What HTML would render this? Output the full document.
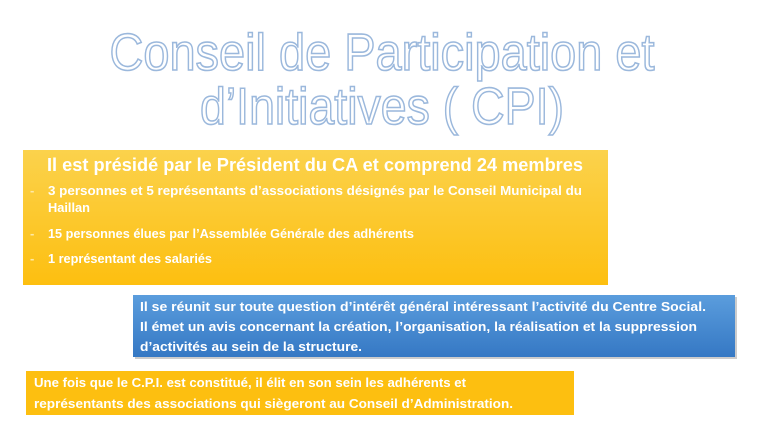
<!DOCTYPE html>
<html><head><meta charset="utf-8"><style>
html,body{margin:0;padding:0;background:#fff;width:768px;height:432px;overflow:hidden}
svg{display:block}
text{font-family:"Liberation Sans",sans-serif}
</style></head><body>
<svg width="768" height="432" viewBox="0 0 768 432">
<defs>
<linearGradient id="y1" x1="0" y1="0" x2="0" y2="1"><stop offset="0" stop-color="#fbd24c"/><stop offset="1" stop-color="#fdbf10"/></linearGradient>
<linearGradient id="b1" x1="0" y1="0" x2="0" y2="1"><stop offset="0" stop-color="#5b9ddd"/><stop offset="1" stop-color="#3578c4"/></linearGradient>
</defs>
<g fill="none" stroke="#9bb8dc" stroke-width="1.6">
<text x="382" y="70" text-anchor="middle" font-size="52" textLength="545" lengthAdjust="spacingAndGlyphs">Conseil de Participation et</text>
<text x="382" y="124" text-anchor="middle" font-size="52" textLength="364" lengthAdjust="spacingAndGlyphs">d’Initiatives ( CPI)</text>
</g>
<rect x="23" y="150" width="585" height="135" fill="url(#y1)"/>
<g fill="#fff" font-weight="bold">
<text x="47" y="171" font-size="18" textLength="536" lengthAdjust="spacingAndGlyphs">Il est présidé par le Président du CA et comprend 24 membres</text>
<g font-size="13">
<text x="30" y="195" fill="#fde9a8">-</text><text x="48" y="195" textLength="534" lengthAdjust="spacingAndGlyphs">3 personnes et 5 représentants d’associations désignés par le Conseil Municipal du</text>
<text x="48" y="212" textLength="42" lengthAdjust="spacingAndGlyphs">Haillan</text>
<text x="30" y="238" fill="#fde9a8">-</text><text x="48" y="238" textLength="366" lengthAdjust="spacingAndGlyphs">15 personnes élues par l’Assemblée Générale des adhérents</text>
<text x="30" y="263" fill="#fde9a8">-</text><text x="48" y="263" textLength="164" lengthAdjust="spacingAndGlyphs">1 représentant des salariés</text>
</g></g>
<rect x="135" y="297" width="602" height="62" fill="#999" opacity="0.5"/>
<rect x="133" y="295" width="602" height="62" fill="url(#b1)"/>
<g fill="#fff" font-weight="bold" font-size="13">
<text x="140" y="311" textLength="566" lengthAdjust="spacingAndGlyphs">Il se réunit sur toute question d’intérêt général intéressant l’activité du Centre Social.</text>
<text x="140" y="331" textLength="557" lengthAdjust="spacingAndGlyphs">Il émet un avis concernant la création, l’organisation, la réalisation et la suppression</text>
<text x="140" y="351" textLength="222" lengthAdjust="spacingAndGlyphs">d’activités au sein de la structure.</text>
</g>
<rect x="26" y="371" width="548" height="44" fill="#fdbf10"/>
<g fill="#fff" font-weight="bold" font-size="13">
<text x="34" y="387" textLength="432" lengthAdjust="spacingAndGlyphs">Une fois que le C.P.I.  est constitué, il élit en son sein les adhérents et</text>
<text x="34" y="408" textLength="479" lengthAdjust="spacingAndGlyphs">représentants des associations qui siègeront au Conseil d’Administration.</text>
</g>
</svg>
</body></html>
